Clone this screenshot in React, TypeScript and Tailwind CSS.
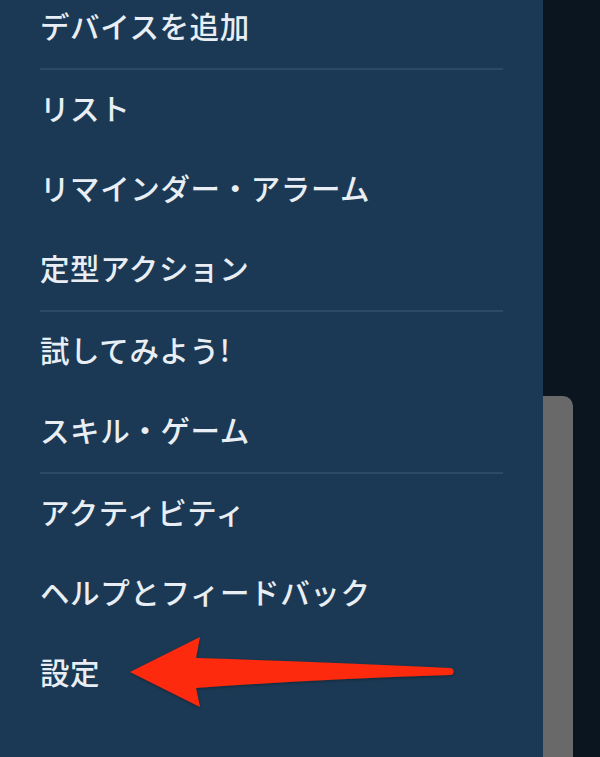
const groups: string[][] = [
  ["デバイスを追加"],
  ["リスト", "リマインダー・アラーム", "定型アクション"],
  ["試してみよう!", "スキル・ゲーム"],
  ["アクティビティ", "ヘルプとフィードバック", "設定"],
];

function MenuItem({ label }: { label: string }) {
  return (
    <div className="h-[80px] pb-1 flex items-center text-[29.5px] font-medium text-[#e8eef3] leading-none tracking-[0.6px]">
      {label}
    </div>
  );
}

function Arrow() {
  return (
    <svg
      className="absolute left-0 top-0 pointer-events-none"
      width="600"
      height="757"
      viewBox="0 0 600 757"
    >
      <defs>
        <filter id="shadow" x="-10%" y="-50%" width="120%" height="200%">
          <feDropShadow dx="0" dy="1" stdDeviation="1.5" floodColor="#000" floodOpacity="0.35" />
        </filter>
      </defs>
      <path
        d="M130 672 L200 637 L196 658 Q320 662 450 668 A3.5 3.5 0 0 1 450 675 Q320 679 196 688 L200 707 Z"
        fill="#fd2a0a"
        filter="url(#shadow)"
      />
    </svg>
  );
}

export default function App() {
  return (
    <div
      className="relative w-[600px] h-[757px] overflow-hidden flex bg-[#0a1520]"
      style={{ fontFamily: '"Noto Sans CJK JP", "Noto Sans", sans-serif' }}
    >
      <div className="w-[543px] h-full bg-[#1b3954] px-10">
        <div className="-mt-[12px]">
          {groups.map((items, gi) => (
            <div key={gi} className={gi > 0 ? "border-t-2 border-[#2a4a67]" : ""}>
              {items.map((label) => (
                <MenuItem key={label} label={label} />
              ))}
            </div>
          ))}
        </div>
      </div>
      <div className="flex-1 flex flex-col pt-[396px]">
        <div className="w-[30px] flex-1 bg-[#696969] rounded-tr-[10px]" />
      </div>
      <Arrow />
    </div>
  );
}
